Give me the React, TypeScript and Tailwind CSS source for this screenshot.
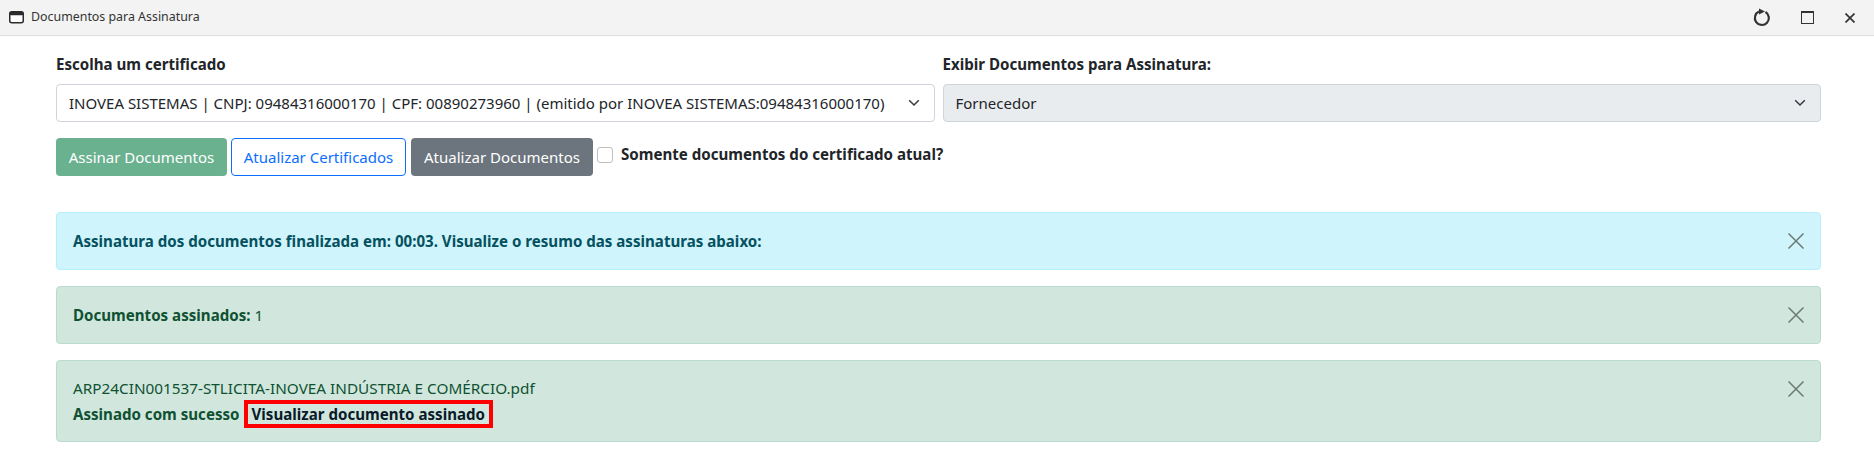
const font = "font-['Noto_Sans','Open_Sans',sans-serif]"

const CloseButton = () => (
  <button className="absolute right-4 top-5 text-[#6b7a74]">
    <svg width="16" height="16" viewBox="0 0 16 16" fill="none" stroke="currentColor" strokeWidth="1.5" className="block">
      <path d="M0.5 0.5 L15.5 15.5 M15.5 0.5 L0.5 15.5" />
    </svg>
  </button>
)

const Chevron = () => (
  <svg width="12" height="8" viewBox="0 0 12 8" fill="none" stroke="#343a40" strokeWidth="1.5">
    <path d="M1.2 1.2 L6 6 L10.8 1.2" />
  </svg>
)

const App = () => {
  return (
    <div className={`${font} w-[1874px] h-[458px] bg-white overflow-hidden text-[#212529]`}>
      {/* barra de titulo */}
      <div className="flex items-center justify-between h-9 bg-[#f3f3f3] border-b border-[#dedede] pl-[9px] pr-[19px]">
        <div className="flex items-center gap-[7px]">
          <svg width="15" height="13" viewBox="0 0 15 13">
            <rect x="0.75" y="0.75" width="13.5" height="11" rx="2" fill="#fff" stroke="#2b2b2b" strokeWidth="1.5" />
            <rect x="0.75" y="0.75" width="13.5" height="3.5" rx="1.5" fill="#2b2b2b" />
          </svg>
          <span className="text-[12.4px] text-[#333]">Documentos para Assinatura</span>
        </div>
        <div className="flex items-center text-[#333]">
          <svg width="18" height="19" viewBox="0 0 18 19" fill="none" stroke="currentColor" strokeWidth="2.2">
            <path d="M12.5 4 A7 7 0 1 1 6 3.6" />
            <path d="M6 0.5 L12 3.5 L6 6.5 Z" fill="currentColor" stroke="none" />
          </svg>
          <svg width="13" height="13" viewBox="0 0 13 13" fill="none" stroke="currentColor" className="ml-[30px]">
            <rect x="0.5" y="0.5" width="12" height="12" />
            <path d="M0 1 H13" strokeWidth="2" />
          </svg>
          <svg width="10" height="10" viewBox="0 0 10 10" fill="none" stroke="currentColor" strokeWidth="1.7" className="ml-[31px]">
            <path d="M0.5 0.5 L9.5 9.5 M9.5 0.5 L0.5 9.5" />
          </svg>
        </div>
      </div>

      <div className="pl-14 pr-[53px]">
        {/* selects */}
        <div className="grid grid-cols-2 gap-2 pt-4">
          <div>
            <label className="block font-bold text-[15.1px] leading-6 mb-2">Escolha um certificado</label>
            <div className="flex items-center justify-between h-[38px] bg-white border border-[#ced4da] rounded pl-3 pr-[14px] text-[15px]">
              <span>INOVEA SISTEMAS | CNPJ: 09484316000170 | CPF: 00890273960 | (emitido por INOVEA SISTEMAS:09484316000170)</span>
              <Chevron />
            </div>
          </div>
          <div>
            <label className="block font-bold text-[15.1px] leading-6 mb-2">Exibir Documentos para Assinatura:</label>
            <div className="flex items-center justify-between h-[38px] bg-[#e9ecef] border border-[#ced4da] rounded pl-3 pr-[14px] text-[15px]">
              <span>Fornecedor</span>
              <Chevron />
            </div>
          </div>
        </div>

        {/* botoes */}
        <div className="flex items-start mt-4">
          <button className="h-[38px] w-[171px] rounded bg-[#6ab18f] text-white text-[15px] mr-1">Assinar Documentos</button>
          <button className="h-[38px] w-[175px] rounded bg-white border border-[#0d6efd] text-[#0d6efd] text-[15px] mr-[5px]">Atualizar Certificados</button>
          <button className="h-[38px] w-[182px] rounded bg-[#6c757d] text-white text-[15px] mr-1">Atualizar Documentos</button>
          <input type="checkbox" className="w-4 h-4 mt-[9px] appearance-none bg-white border border-[#bfbfbf] rounded-[3px]" />
          <label className="font-bold text-[15.1px] leading-6 ml-2 mt-1">Somente documentos do certificado atual?</label>
        </div>

        {/* alertas */}
        <div className="relative mt-9 h-[58px] flex items-center px-4 bg-[#cff4fc] border border-[#b6effb] rounded text-[#055160] text-[15.1px]">
          <b>Assinatura dos documentos finalizada em: 00:03. Visualize o resumo das assinaturas abaixo:</b>
          <CloseButton />
        </div>
        <div className="relative mt-4 h-[58px] flex items-center px-4 bg-[#d1e7dd] border border-[#badbcc] rounded text-[#0f5132] text-[15.1px]">
          <span><b>Documentos assinados:</b> 1</span>
          <CloseButton />
        </div>
        <div className="relative mt-4 h-[82px] px-4 pt-[15px] bg-[#d1e7dd] border border-[#badbcc] rounded text-[#0f5132] text-[15.3px] leading-6">
          <div>ARP24CIN001537-STLICITA-INOVEA INDÚSTRIA E COMÉRCIO.pdf</div>
          <div className="flex items-center text-[15.1px]">
            <b>Assinado com sucesso</b>
            <b className="ml-[4px] px-[4px] border-4 border-[#ff0000] text-[#0a1a2a] text-[15.1px] leading-5">Visualizar documento assinado</b>
          </div>
          <CloseButton />
        </div>
      </div>
    </div>
  )
}

export default App
